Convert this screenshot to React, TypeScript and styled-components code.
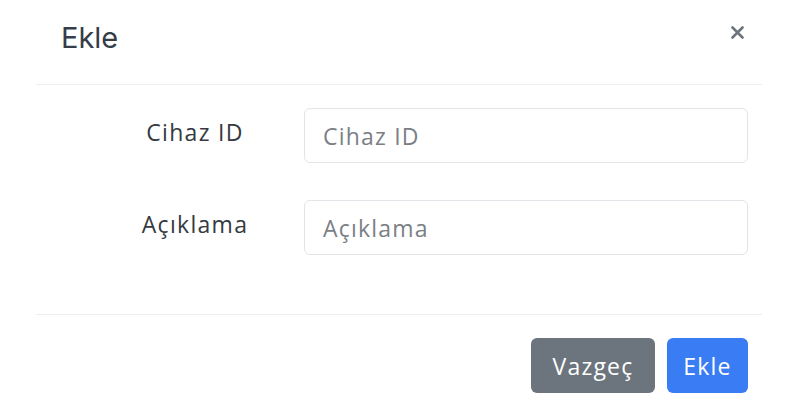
import React from 'react';
import styled, {createGlobalStyle} from 'styled-components';

const GlobalStyle = createGlobalStyle`
	html, body {
		margin: 0;
		padding: 0;
		background: #ffffff;
	}

	body {
		font-family: 'Open Sans', 'Liberation Sans', sans-serif;
		color: #343a40;
	}

	* {
		box-sizing: border-box;
	}
`;

const Modal = styled.div`
	width: 800px;
	height: 400px;
	padding: 0 38px 0 36px;
	overflow: hidden;
`;

const Header = styled.div`
	height: 85px;
	display: flex;
	align-items: flex-start;
	justify-content: space-between;
	padding: 16px 17px 0 25px;
	border-bottom: 1px solid #eceef0;
`;

const Title = styled.h5`
	margin: 0;
	font-family: Inter, 'Liberation Sans', sans-serif;
	font-size: 29px;
	font-weight: 400;
	line-height: 44px;
	color: #353d48;
`;

const CloseButton = styled.button`
	margin-top: 8px;
	width: 16px;
	height: 16px;
	padding: 0;
	border: none;
	background: transparent;
	color: #6c757d;
	cursor: pointer;
	display: flex;
	align-items: center;
	justify-content: center;
`;

const Body = styled.div`
	display: flex;
	flex-direction: column;
	gap: 37px;
	padding: 23px 14px 59px 50px;
`;

const Row = styled.div`
	display: grid;
	grid-template-columns: 218px 444px;
	align-items: start;
`;

const Label = styled.label`
	padding-top: 8px;
	text-align: center;
	font-size: 23px;
	letter-spacing: 1.3px;
	line-height: 33px;
	color: #343a40;
`;

const Input = styled.input`
	height: 55px;
	width: 100%;
	padding: 0 18px;
	border: 1px solid #e1e4e8;
	border-radius: 6px;
	font-family: inherit;
	font-size: 23px;
	letter-spacing: 1.2px;
	color: #343a40;
	background: #ffffff;
	outline: none;

	&::placeholder {
		color: #7a7f86;
	}
`;

const Footer = styled.div`
	display: flex;
	justify-content: flex-end;
	gap: 12px;
	padding: 23px 14px 0 0;
	border-top: 1px solid #eceef0;
`;

const Button = styled.button<{$variant: 'secondary' | 'primary'; $width: number}>`
	width: ${({$width}) => $width}px;
	height: 55px;
	padding: 0;
	border: none;
	border-radius: 6px;
	font-family: inherit;
	font-size: 23px;
	letter-spacing: 1.2px;
	color: #ffffff;
	background: ${({$variant}) => ($variant === 'primary' ? '#3a7cf4' : '#6c757d')};
	cursor: pointer;
`;

const CloseIcon = () => (
	<svg width="13" height="13" viewBox="0 0 13 13">
		<path d="M1.5 1.5 L11.5 11.5 M11.5 1.5 L1.5 11.5" stroke="currentColor" strokeWidth="2.6" strokeLinecap="round" />
	</svg>
);

export default function App() {
	return (
		<>
			<GlobalStyle />
			<Modal>
				<Header>
					<Title>Ekle</Title>
					<CloseButton aria-label="Kapat">
						<CloseIcon />
					</CloseButton>
				</Header>
				<Body>
					<Row>
						<Label htmlFor="cihaz-id">Cihaz ID</Label>
						<Input id="cihaz-id" placeholder="Cihaz ID" />
					</Row>
					<Row>
						<Label htmlFor="aciklama">Açıklama</Label>
						<Input id="aciklama" placeholder="Açıklama" />
					</Row>
				</Body>
				<Footer>
					<Button $variant="secondary" $width={124}>
						Vazgeç
					</Button>
					<Button $variant="primary" $width={81}>
						Ekle
					</Button>
				</Footer>
			</Modal>
		</>
	);
}
